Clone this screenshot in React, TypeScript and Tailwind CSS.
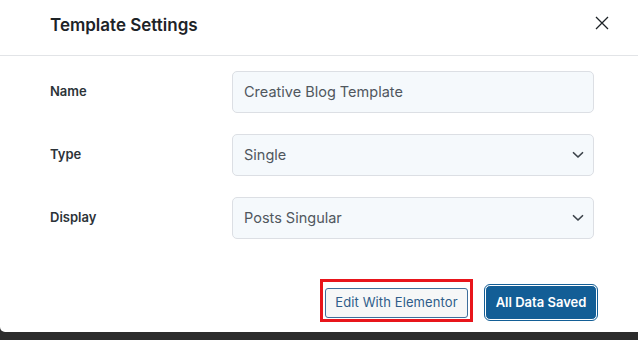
import React from "react";

function Chevron() {
  return (
    <svg width="12" height="8" viewBox="0 0 12 8" fill="none" className="absolute right-[9px] top-1/2 -translate-y-1/2">
      <path d="M1.5 1.75 L6 6 L10.5 1.75" stroke="#3c434a" strokeWidth="1.7" strokeLinecap="round" strokeLinejoin="round" />
    </svg>
  );
}

function Field({ label, value, select }: { label: string; value: string; select?: boolean }) {
  return (
    <div className="flex items-center">
      <div className="w-[182px] text-[13px] font-semibold text-[#2c3338]">{label}</div>
      <div className="relative w-[362px] h-[42px] rounded-[5px] border border-[#dcdfe4] bg-[#f5f9fc] flex items-center pl-[11px] text-[14.5px] text-[#50575e]">
        {value}
        {select && <Chevron />}
      </div>
    </div>
  );
}

export default function App() {
  return (
    <div className="w-[638px] h-[340px] bg-[#2c2c2c] flex flex-col" style={{ fontFamily: "Inter, 'Noto Sans', sans-serif" }}>
      <div className="h-[332px] bg-white rounded-bl-[5px] flex flex-col">
        <div className="h-[56px] border-b border-[#e2e4e7] flex items-start justify-between pl-[50px] pr-[29px] pt-[12px]">
          <div className="text-[17px] leading-[26px] font-semibold text-[#1d2327]">Template Settings</div>
          <svg width="14" height="14" viewBox="0 0 14 14" className="mt-[4px]">
            <path d="M1 1 L13 13 M13 1 L1 13" stroke="#1d2327" strokeWidth="1.3" />
          </svg>
        </div>
        <div className="flex flex-col gap-[21px] pl-[50px] pt-[15px]">
          <Field label="Name" value="Creative Blog Template" />
          <Field label="Type" value="Single" select />
          <Field label="Display" value="Posts Singular" select />
        </div>
        <div className="flex justify-end items-end gap-[12px] pr-[41px] mt-[40px]">
          <div className="border-[3px] border-[#e8151b] pt-[6px] pb-[1px] px-[2px]">
            <button className="w-[143px] h-[30px] rounded-[3px] border border-[#3f6f9c] bg-[#f6f7f7] text-[13px] text-[#2f5d8a] tracking-[0.1px]">
              Edit With Elementor
            </button>
          </div>
          <button className="w-[112px] h-[35px] rounded-[5px] bg-[#135e96] border-[1.5px] border-white outline outline-[1.5px] outline-[#135e96] text-[13px] font-semibold text-white mb-[2px]">
            All Data Saved
          </button>
        </div>
      </div>
    </div>
  );
}
